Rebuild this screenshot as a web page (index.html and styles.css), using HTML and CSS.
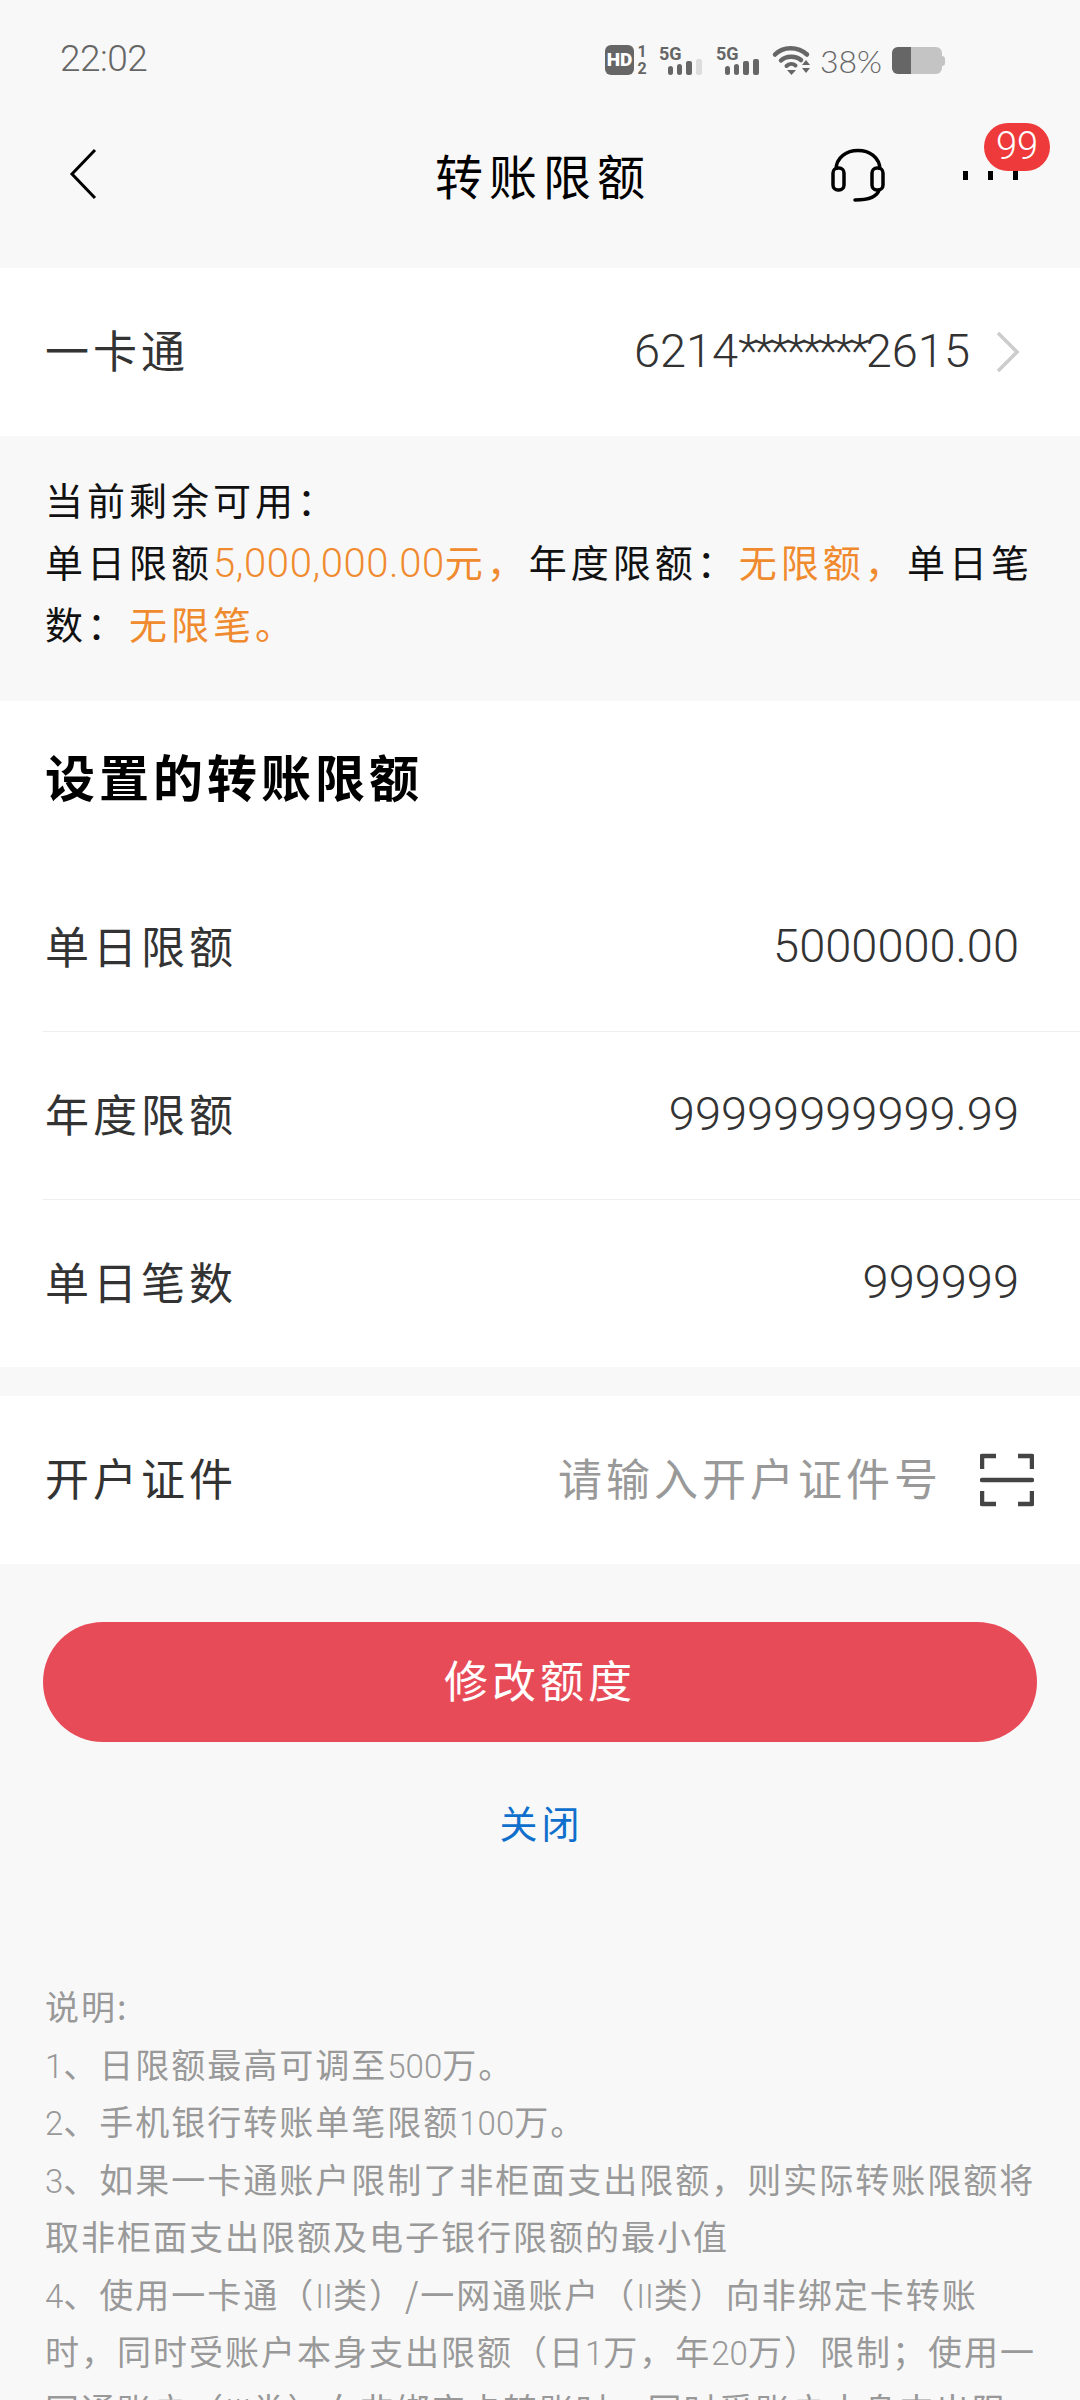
FILE: index.html

```html
<!DOCTYPE html>
<html lang="zh-CN">
<head>
    <meta charset="UTF-8">
    <meta name="viewport" content="width=device-width, initial-scale=1.0">
    <title>转账限额</title>
    <link rel="stylesheet" href="styles.css">
</head>
<body>
    <div class="status-bar">
        <div class="time">22:02</div>
        <div class="status-icons">
            <svg class="ic-hd" width="42" height="30" viewBox="0 0 42 30">
                <rect x="0" y="0" width="29" height="30" rx="6" fill="#666"/>
                <text x="14.5" y="21" class="hd-text">HD</text>
                <text x="37" y="12" class="sim-text">1</text>
                <text x="37" y="29" class="sim-text">2</text>
            </svg>
            <svg class="ic-signal" width="44" height="30" viewBox="0 0 44 30">
                <text x="0" y="15" class="five-g">5G</text>
                <rect x="9" y="21" width="5" height="9" rx="2.5" fill="#666"/>
                <rect x="18" y="19" width="5" height="11" rx="2.5" fill="#666"/>
                <rect x="27" y="16" width="6" height="14" rx="2" fill="#666"/>
                <rect x="37" y="14" width="6" height="16" rx="2" fill="#ddd"/>
            </svg>
            <svg class="ic-signal" width="44" height="30" viewBox="0 0 44 30">
                <text x="0" y="15" class="five-g">5G</text>
                <rect x="9" y="21" width="5" height="9" rx="2.5" fill="#666"/>
                <rect x="18" y="19" width="5" height="11" rx="2.5" fill="#666"/>
                <rect x="27" y="16" width="6" height="14" rx="2" fill="#666"/>
                <rect x="37" y="14" width="6" height="16" rx="2" fill="#666"/>
            </svg>
            <svg class="ic-wifi" width="38" height="30" viewBox="0 0 38 30">
                <path d="M2 9.5 C10 1 25 1 34 9.5" fill="none" stroke="#666" stroke-width="4.5" stroke-linecap="round"/>
                <path d="M8 15.5 C13 10.5 23 10.5 28 15" fill="none" stroke="#666" stroke-width="4.5" stroke-linecap="round"/>
                <path d="M13.5 21 C16 18.5 20 18.5 22.5 20.5" fill="none" stroke="#666" stroke-width="4" stroke-linecap="round"/>
                <path d="M14 25 H23 L18.5 30 Z" fill="#666"/>
                <path d="M33 15 L37 20 H29 Z M29 23 H37 L33 28 Z" fill="#666"/>
            </svg>
            <div class="battery-text">38%</div>
            <div class="battery">
                <div class="battery-fill"></div>
                <div class="battery-cap"></div>
            </div>
        </div>
    </div>

    <div class="nav">
        <svg class="back" width="28" height="52" viewBox="0 0 28 52">
            <path d="M26 2 L3 26 L26 50" fill="none" stroke="#000" stroke-width="3"/>
        </svg>
        <div class="nav-title">转账限额</div>
        <svg class="headset" width="54" height="54" viewBox="0 0 54 54">
            <path d="M5 22 C5 -4 49 -4 49 22" fill="none" stroke="#000" stroke-width="3.5"/>
            <rect x="2" y="20" width="11" height="22" rx="5" fill="none" stroke="#000" stroke-width="3.5"/>
            <rect x="41" y="20" width="11" height="22" rx="5" fill="none" stroke="#000" stroke-width="3.5"/>
            <path d="M48 42 C46 49 38 52 24 52" fill="none" stroke="#000" stroke-width="3.5" stroke-linecap="round"/>
        </svg>
        <div class="more">
            <span class="dot"></span><span class="dot"></span><span class="dot"></span>
            <div class="badge">99</div>
        </div>
    </div>

    <div class="row card-row">
        <div class="label">一卡通</div>
        <div class="row-right">
            <div class="value">6214<span class="stars">********</span>2615</div>
            <svg class="chevron" width="24" height="42" viewBox="0 0 24 42">
                <path d="M2 2 L21 21 L2 40" fill="none" stroke="#ccc" stroke-width="3.5"/>
            </svg>
        </div>
    </div>

    <div class="remain">
        当前剩余可用：<br>
        单日限额<span class="num orange">5,000,000.00</span><span class="orange">元，</span>年度限额：<span class="orange">无限额，</span>单日笔<br>
        数：<span class="orange">无限笔。</span>
    </div>

    <div class="limits">
        <div class="section-title">设置的转账限额</div>
        <div class="row limit-row">
            <div class="label">单日限额</div>
            <div class="value">5000000.00</div>
        </div>
        <div class="row limit-row">
            <div class="label">年度限额</div>
            <div class="value">99999999999.99</div>
        </div>
        <div class="row limit-row">
            <div class="label">单日笔数</div>
            <div class="value">999999</div>
        </div>
    </div>

    <div class="row id-row">
        <div class="label">开户证件</div>
        <div class="row-right">
            <div class="placeholder">请输入开户证件号</div>
            <svg class="scan" width="54" height="54" viewBox="0 0 54 54">
                <path d="M2 16 V3 H16 M38 3 H52 V16 M2 38 V51 H16 M38 51 H52 V38" fill="none" stroke="#444" stroke-width="4.5" stroke-linejoin="round"/>
                <path d="M2 27 H52" fill="none" stroke="#444" stroke-width="4.5" stroke-linecap="round"/>
            </svg>
        </div>
    </div>

    <button class="submit">修改额度</button>
    <div class="close">关闭</div>

    <div class="notes">
        <div class="note-line">说明:</div>
        <div class="note-line"><span class="num">1</span>、日限额最高可调至<span class="num">500</span>万。</div>
        <div class="note-line"><span class="num">2</span>、手机银行转账单笔限额<span class="num">100</span>万。</div>
        <div class="note-line"><span class="num">3</span>、如果一卡通账户限制了非柜面支出限额，则实际转账限额将</div>
        <div class="note-line">取非柜面支出限额及电子银行限额的最小值</div>
        <div class="note-line"><span class="num">4</span>、使用一卡通（<span class="num">II</span>类）/一网通账户（<span class="num">II</span>类）向非绑定卡转账</div>
        <div class="note-line">时，同时受账户本身支出限额（日<span class="num">1</span>万，年<span class="num">20</span>万）限制；使用一</div>
        <div class="note-line">网通账户（<span class="num">III</span>类）向非绑定卡转账时，同时受账户本身支出限</div>
    </div>
</body>
</html>
```

FILE: styles.css

```css
html, body { margin: 0; padding: 0; }
body { width: 1080px; height: 2400px; overflow: hidden; background-color: #F8F8F8; font-family: "Noto Sans CJK SC", Roboto, sans-serif; color: #333; }

.status-bar { height: 60px; padding: 30px 138px 2px 60px; display: flex; justify-content: space-between; align-items: center; }
.time { font-family: Roboto, sans-serif; font-weight: 300; font-size: 37px; letter-spacing: -0.5px; color: #666; padding-bottom: 4px; }
.status-icons { display: flex; align-items: center; }
.status-icons svg { overflow: visible; }
.ic-hd { margin-right: 12px; }
.ic-signal { margin-right: 13px; }
.ic-wifi { margin-right: 9px; }
.hd-text { font-family: Roboto, sans-serif; font-weight: 900; font-size: 19px; fill: #fff; text-anchor: middle; }
.sim-text { font-family: Roboto, sans-serif; font-weight: 700; font-size: 16px; fill: #666; text-anchor: middle; }
.five-g { font-family: Roboto, sans-serif; font-weight: 700; font-size: 18px; fill: #666; }
.battery-text { font-family: Lato, sans-serif; font-weight: 300; font-size: 32px; color: #666; margin-right: 10px; }
.battery { width: 50px; height: 27px; border-radius: 6px; background: #C4C4C4; position: relative; }
.battery-fill { width: 19px; height: 27px; background: #666; border-radius: 6px 0 0 6px; }
.battery-cap { position: absolute; right: -3px; top: 9px; width: 3px; height: 10px; background: #C4C4C4; border-radius: 0 3px 3px 0; }

.nav { height: 176px; padding: 0 30px 12px 69px; box-sizing: border-box; display: flex; align-items: center; position: relative; }
.back { flex: none; }
.nav-title { position: absolute; left: 6px; right: 0; top: 50px; text-align: center; font-size: 48px; line-height: 64px; letter-spacing: 6px; color: #000; }
.headset { position: absolute; left: 831px; top: 56px; }
.more { position: absolute; left: 963px; top: 79px; display: flex; gap: 20px; }
.dot { width: 5px; height: 9px; background: #000; display: block; }
.badge { position: absolute; left: 21px; top: -48px; width: 66px; height: 48px; border-radius: 24px; background: #EE3A3A; color: #fff; font-family: Roboto, sans-serif; font-weight: 300; font-size: 38px; line-height: 46px; text-align: center; }

.row { display: flex; justify-content: space-between; align-items: center; background: #fff; }
.row-right { display: flex; align-items: center; }
.label { font-size: 44px; letter-spacing: 4px; color: #333; padding-bottom: 6px; }
.value { font-family: Roboto, sans-serif; font-weight: 300; font-size: 47px; color: #333; padding-bottom: 4px; }
.stars { letter-spacing: -4px; }

.card-row { height: 168px; padding: 0 60px 0 45px; }
.chevron { margin-left: 26px; }

.remain { height: 265px; box-sizing: border-box; padding-top: 32px; padding-left: 45px; font-size: 38px; letter-spacing: 4px; line-height: 62px; color: #111; white-space: nowrap; }
.num { font-family: Roboto, sans-serif; font-weight: 300; letter-spacing: 0; line-height: 0; }
.remain .num { font-size: 40px; letter-spacing: 0.6px; }
.orange { color: #F08A2E; }

.limits { background: #fff; height: 666px; }
.section-title { height: 163px; box-sizing: border-box; padding: 40px 0 0 45px; font-size: 50px; line-height: 68px; letter-spacing: 4px; font-weight: 700; color: #000; }
.limit-row { height: 167px; margin-left: 43px; padding: 0 61px 0 2px; border-bottom: 1px solid #EEE; }
.limit-row:last-child { border-bottom: none; }

.id-row { height: 168px; margin-top: 29px; padding: 0 46px 0 45px; }
.placeholder { font-size: 44px; letter-spacing: 4px; color: #999; padding-bottom: 6px; }
.scan { margin-left: 38px; }

.submit { display: block; width: 994px; height: 120px; margin: 58px 0 0 43px; padding: 0 0 6px; border: none; border-radius: 60px; background: #E84B58; color: #fff; font-family: "Noto Sans CJK SC", sans-serif; font-size: 44px; letter-spacing: 4px; }
.close { margin-top: 52px; padding-left: 3px; text-align: center; font-size: 38px; line-height: 56px; letter-spacing: 4px; color: #0F6FCC; }

.notes { margin-top: 127px; padding-left: 45px; font-size: 34px; letter-spacing: 2px; color: #999; white-space: nowrap; }
.note-line { height: 57.5px; line-height: 57.5px; }
.notes .num { font-size: 33px; }
```
